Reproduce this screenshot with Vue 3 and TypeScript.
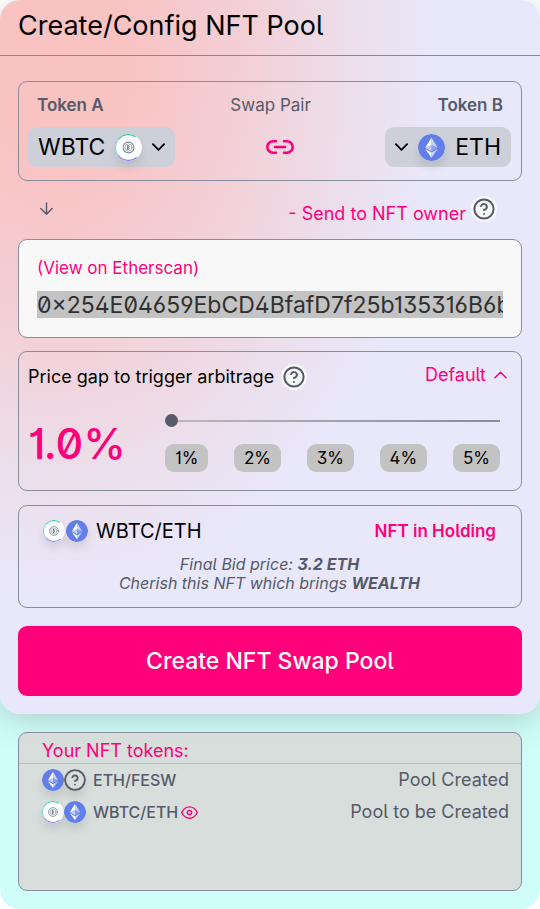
<script setup lang="ts">
import { computed, defineComponent, h, ref } from 'vue'

const TokenIcon = defineComponent({
  props: { symbol: { type: String, required: true } },
  setup(props) {
    const eth = () =>
      h('svg', { class: 'token-svg', viewBox: '0 0 28 28', 'aria-hidden': 'true' }, [
        h('circle', { cx: 14, cy: 14, r: 14, fill: '#627eea' }),
        h('path', { d: 'M14 3.5v7.8l6.5 2.9z', fill: '#fff', 'fill-opacity': 0.65 }),
        h('path', { d: 'M14 3.5 7.5 14.2l6.5-2.9z', fill: '#fff' }),
        h('path', { d: 'M14 19.3v5.2l6.5-9z', fill: '#fff', 'fill-opacity': 0.65 }),
        h('path', { d: 'M14 24.5v-5.2l-6.5-3.8z', fill: '#fff' }),
        h('path', { d: 'M14 18.1l6.5-3.9-6.5-2.9z', fill: '#fff', 'fill-opacity': 0.25 }),
        h('path', { d: 'M7.5 14.2l6.5 3.9v-6.8z', fill: '#fff', 'fill-opacity': 0.6 }),
      ])
    const wbtc = () =>
      h('svg', { class: 'token-svg', viewBox: '0 0 28 28', fill: 'none', 'aria-hidden': 'true' }, [
        h('circle', { cx: 14, cy: 14, r: 14, fill: '#fff' }),
        h('path', { d: 'M4 5A13.3 13.3 0 0 1 21 2.7', stroke: '#2fd0a5', 'stroke-width': 1.3 }),
        h('path', { d: 'M4 5A13.3 13.3 0 0 0 4 23', stroke: '#72cde0', 'stroke-width': 1.3 }),
        h('path', { d: 'M4 23A13.3 13.3 0 0 0 22 24.6', stroke: '#8b83f5', 'stroke-width': 1.3 }),
        h('circle', { cx: 14, cy: 14, r: 5.6, stroke: '#7d8a94', 'stroke-width': 1.1 }),
        h('circle', { cx: 14, cy: 14, r: 3.7, stroke: '#87949d', 'stroke-width': 0.8 }),
        h('path', { d: 'M13.2 12.2v3.6M13.2 12.2h1q1 .9 0 1.8 1.4.9 0 1.8h-1', stroke: '#56646f', 'stroke-width': 1 }),
      ])
    const unknown = () =>
      h('svg', { class: 'token-svg unknown', viewBox: '0 0 24 24', 'aria-hidden': 'true' }, [
        h('circle', { cx: 12, cy: 12, r: 10.8 }),
        h('path', { d: 'M9.1 9a3 3 0 0 1 5.8 1c0 2-3 3-3 3M12 17h.01' }),
      ])
    return () => (props.symbol === 'ETH' ? eth() : props.symbol === 'WBTC' ? wbtc() : unknown())
  },
})

interface Holding {
  tokens: [string, string]
  status: string
  watched: boolean
}

const address = ref('0×254E04659EbCD4BfafD7f25b135316B6b')
const gap = ref(1)
const gapLabel = computed(() => `${Number(gap.value).toFixed(1)}%`)
const presets = [1, 2, 3, 4, 5]
const holdings: Holding[] = [
  { tokens: ['ETH', 'FESW'], status: 'Pool Created', watched: false },
  { tokens: ['WBTC', 'ETH'], status: 'Pool to be Created', watched: true },
]
</script>

<template>
  <div class="page">
    <main class="pool">
      <header class="head"><h1>Create/Config NFT Pool</h1></header>
      <div class="body">
        <section class="card pair">
          <div class="pair-row labels">
            <b>Token A</b><span>Swap Pair</span><b>Token B</b>
          </div>
          <div class="pair-row">
            <button type="button" class="token">
              <span>WBTC</span>
              <TokenIcon symbol="WBTC" class="icon-lg" />
              <svg class="chev" viewBox="0 0 14 8"><path d="M1 1l6 6 6-6" /></svg>
            </button>
            <svg class="link" viewBox="0 0 28 14"><path d="M10 1.3H7a5.7 5.7 0 0 0 0 11.4h3M18 1.3h3a5.7 5.7 0 0 1 0 11.4h-3M9 7h10" /></svg>
            <button type="button" class="token">
              <svg class="chev" viewBox="0 0 14 8"><path d="M1 1l6 6 6-6" /></svg>
              <TokenIcon symbol="ETH" class="icon-lg" />
              <span>ETH</span>
            </button>
          </div>
        </section>

        <div class="send">
          <svg class="arrow" viewBox="0 0 24 24"><path d="M12 4v16M4 12l8 8 8-8" /></svg>
          <div class="send-right">
            <button type="button" class="text-btn">- Send to NFT owner</button>
            <button type="button" class="help" aria-label="Help">
              <svg viewBox="0 0 24 24"><circle cx="12" cy="12" r="9.6" /><path d="M9.1 9a3 3 0 0 1 5.8 1c0 2-3 3-3 3M12 17h.01" /></svg>
            </button>
          </div>
        </div>

        <section class="card recipient">
          <a href="#">(View on Etherscan)</a>
          <input v-model="address" type="text" aria-label="Recipient address" spellcheck="false" />
        </section>

        <section class="card gap">
          <div class="gap-head">
            <div class="gap-title">
              <label for="gap">Price gap to trigger arbitrage</label>
              <button type="button" class="help" aria-label="Help">
                <svg viewBox="0 0 24 24"><circle cx="12" cy="12" r="9.6" /><path d="M9.1 9a3 3 0 0 1 5.8 1c0 2-3 3-3 3M12 17h.01" /></svg>
              </button>
            </div>
            <button type="button" class="text-btn default">
              Default <svg viewBox="0 0 14 8"><path d="M1 7l6-6 6 6" /></svg>
            </button>
          </div>
          <div class="gap-main">
            <output for="gap">{{ gapLabel }}</output>
            <div class="controls">
              <input id="gap" v-model="gap" type="range" min="1" max="5" step="0.1" />
              <div class="presets">
                <button v-for="p in presets" :key="p" type="button" @click="gap = p">{{ p }}%</button>
              </div>
            </div>
          </div>
        </section>

        <section class="card bid">
          <div class="bid-head">
            <div class="duo">
              <TokenIcon symbol="WBTC" class="icon-sm" /><TokenIcon symbol="ETH" class="icon-sm" />
              <span class="name">WBTC/ETH</span>
            </div>
            <strong>NFT in Holding</strong>
          </div>
          <p>Final Bid price: <b>3.2 ETH</b><br />Cherish this NFT which brings <b>WEALTH</b></p>
        </section>

        <button type="button" class="primary">Create NFT Swap Pool</button>
      </div>
    </main>

    <section class="card tokens">
      <h2>Your NFT tokens:</h2>
      <table>
        <tbody>
          <tr v-for="row in holdings" :key="row.tokens.join('/')">
            <th scope="row">
              <div class="duo">
                <TokenIcon v-for="t in row.tokens" :key="t" :symbol="t" class="icon-sm" />
                <span class="pair-name">{{ row.tokens.join('/') }}</span>
                <svg v-if="row.watched" class="eye" viewBox="0 0 24 24"><path d="M1 12s4-8 11-8 11 8 11 8-4 8-11 8-11-8-11-8z" /><circle cx="12" cy="12" r="3" /></svg>
              </div>
            </th>
            <td>{{ row.status }}</td>
          </tr>
        </tbody>
      </table>
    </section>
  </div>
</template>

<style>
body {
  background: #fff;
}
</style>

<style scoped>
.page,
.page * {
  box-sizing: border-box;
}
.page {
  font-family: Inter, sans-serif;
  font-feature-settings: 'ss01' on, 'ss02' on, 'cv01' on, 'cv03' on;
  font-size: 18px;
  line-height: 24px;
  color: #000;
  background: #cffdfa;
  border-radius: 20px;
  padding-bottom: 18px;
}
button,
input {
  font: inherit;
  font-feature-settings: inherit;
  color: inherit;
  border: 0;
  margin: 0;
  padding: 0;
  background: none;
}
svg {
  flex: none;
  fill: none;
  stroke: currentColor;
  stroke-width: 2;
  stroke-linecap: round;
  stroke-linejoin: round;
}
.pool {
  border-radius: 20px;
  background: radial-gradient(72% 76% at 10% 8%, #fac3c2 0%, #f9c3c3 20%, #f3d0d7 50%, #ecdfec 78%, #e9e8fb 100%);
  box-shadow: 0 6px 32px rgba(100, 110, 100, 0.3);
}
.head {
  padding: 8px 18px 11px;
  border-bottom: 1px solid #8f8594;
}
h1 {
  margin: 0;
  font-size: 27px;
  line-height: 36px;
  font-weight: 400;
}
.body {
  display: flex;
  flex-direction: column;
  padding: 25px 18px 18px;
}
.card {
  border: 1px solid #888d9b;
  border-radius: 9px;
}
.pair {
  padding: 11px 10px 13px 9px;
  display: grid;
  gap: 10px;
}
.pair-row {
  display: flex;
  justify-content: space-between;
  align-items: center;
}
.labels {
  padding: 0 8px 0 9px;
  font-size: 17px;
  color: #565a69;
}
.labels b {
  font-weight: 600;
}
.token {
  display: flex;
  align-items: center;
  gap: 10px;
  height: 40px;
  padding: 0 10px;
  border-radius: 9px;
  background: #ced0d9;
  font-size: 23px;
}
.token-svg {
  stroke: none;
  border-radius: 50%;
  box-shadow: 0 6px 10px rgba(0, 0, 0, 0.1);
}
.unknown {
  stroke: #565a69;
}
.icon-lg {
  width: 27px;
  height: 27px;
}
.icon-sm {
  width: 22px;
  height: 22px;
}
.chev {
  width: 13px;
  height: 8px;
}
.link {
  width: 28px;
  height: 14px;
  color: #ff007a;
  stroke-width: 2.6;
}
.send {
  display: flex;
  justify-content: space-between;
  padding: 15px 25px 13px 20px;
}
.arrow {
  width: 17px;
  height: 17px;
  margin-top: 4px;
  color: #565a69;
  stroke-width: 2;
}
.send-right {
  display: flex;
  gap: 5px;
}
.text-btn {
  color: #ff007a;
  line-height: 24px;
}
.send-right .text-btn {
  padding-top: 6px;
}
.help {
  width: 26px;
  height: 26px;
  padding: 1px;
  border-radius: 50%;
  background: #f8f8f8;
  color: #565a69;
}
.send .help {
  margin-bottom: 3px;
}
.help svg {
  display: block;
  width: 24px;
  height: 24px;
}
.recipient {
  padding: 16px 18px 19px;
  background: #f8f8f8;
}
.recipient a {
  display: block;
  font-size: 17px;
  color: #ff007a;
  text-decoration: none;
  margin-bottom: 11px;
}
.recipient input {
  display: block;
  width: 100%;
  height: 27px;
  background: #c3c3c3;
  color: #303030;
  font-size: 23px;
}
.gap {
  margin-top: 13px;
  padding: 10px 21px 18px 9px;
}
.gap-head,
.gap-title,
.gap-main,
.bid-head,
.duo {
  display: flex;
  align-items: center;
}
.gap-head,
.bid-head {
  justify-content: space-between;
}
.gap-title {
  gap: 7px;
  padding-top: 2px;
}
.default {
  display: flex;
  align-items: center;
  gap: 8px;
  margin: 0 -7px 3px 0;
}
.default svg {
  width: 13px;
  height: 8px;
  stroke-width: 1.6;
}
.gap-main {
  justify-content: space-between;
  margin-top: 24px;
}
output {
  font-size: 43px;
  line-height: 54px;
  font-weight: 500;
  color: #ff007a;
}
.controls {
  flex: none;
  width: 71%;
}
.controls input {
  display: block;
  width: 100%;
  height: 14px;
  appearance: none;
}
.controls input::-webkit-slider-runnable-track {
  height: 2px;
  background: linear-gradient(90deg, #bbb, #888d9b);
}
.controls input::-webkit-slider-thumb {
  appearance: none;
  width: 13px;
  height: 13px;
  margin-top: -6px;
  border-radius: 50%;
  background: #565a69;
}
.presets {
  display: flex;
  justify-content: space-between;
  margin-top: 16px;
}
.presets button {
  height: 28px;
  padding: 0 10px;
  border-radius: 9px;
  background: #c3c3c3;
  font-size: 17px;
}
.bid {
  margin-top: 14px;
  padding: 13px 25px 14px 24px;
}
.bid .duo {
  gap: 1px;
}
.name {
  margin-left: 7px;
  font-size: 20px;
}
.bid strong {
  font-size: 17px;
  font-weight: 600;
  color: #ff007a;
}
.bid p {
  margin: 12px 0 0;
  text-align: center;
  font-size: 16px;
  line-height: 19px;
  font-style: italic;
  color: #565a69;
}
.primary {
  height: 70px;
  margin-top: 18px;
  border-radius: 9px;
  background: #ff007a;
  color: #fff;
  font-size: 23px;
  font-weight: 500;
}
.tokens {
  margin: 18px 18px 0;
  min-height: 159px;
  background: rgba(216, 216, 214, 0.85);
}
h2 {
  margin: 0;
  padding: 6px 23px 0;
  border-bottom: 1px solid #b8bcbf;
  font-size: 18px;
  line-height: 24px;
  font-weight: 400;
  color: #ff007a;
}
table {
  width: 100%;
  border-collapse: collapse;
  color: #565a69;
}
th,
td {
  height: 32px;
  padding: 0;
}
th {
  padding-left: 23px;
  font-size: 16px;
  font-weight: 500;
}
td {
  padding-right: 12px;
  text-align: right;
}
.pair-name {
  margin-left: 7px;
}
.eye {
  width: 17px;
  height: 17px;
  margin-left: 3px;
  color: #ff007a;
}
</style>
